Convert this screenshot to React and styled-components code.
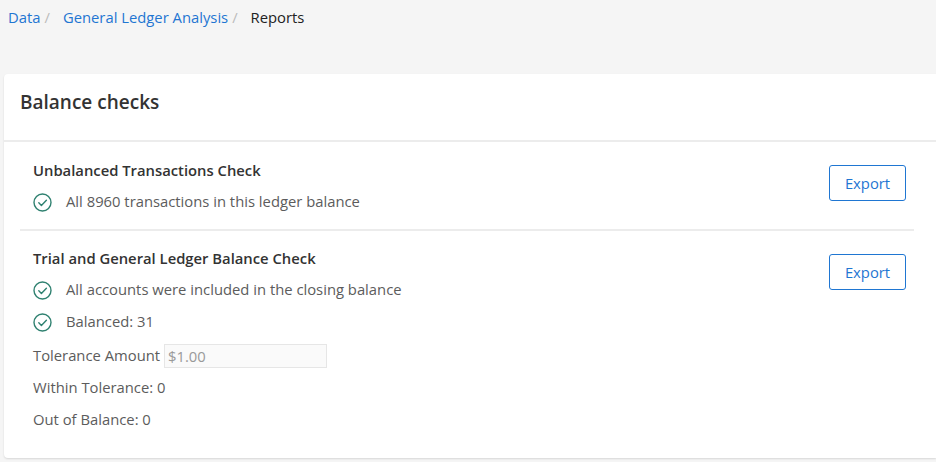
import React from "react";
import styled, { createGlobalStyle } from "styled-components";

const Global = createGlobalStyle`
  html, body {
    margin: 0;
    padding: 0;
    background: #f5f5f5;
    font-family: "Open Sans", "Liberation Sans", sans-serif;
  }
`;

const Page = styled.div`
  width: 936px;
  height: 462px;
  overflow: hidden;
  padding-left: 4px;
  box-sizing: border-box;
`;

const Crumbs = styled.nav`
  display: flex;
  align-items: center;
  height: 34px;
  margin-left: 4px;
  margin-bottom: 40px;
  font-size: 14.8px;
`;

const Crumb = styled.a`
  color: ${(p) => (p.$current ? "#222" : "#1f76d2")};
`;

const Slash = styled.span`
  color: #bbb;
  margin: 0 13px 0 4px;
`;

const Card = styled.section`
  width: 932px;
  height: 384px;
  background: #fff;
  border-radius: 4px 0 0 4px;
  box-shadow: 0 1px 2px rgba(0, 0, 0, 0.12);
`;

const CardHeader = styled.header`
  height: 68px;
  display: flex;
  align-items: center;
  padding: 0 16px 10px;
  box-sizing: border-box;
  border-bottom: 2px solid #ececec;
`;

const CardTitle = styled.h2`
  margin: 0;
  font-size: 19px;
  font-weight: 600;
  color: #333;
`;

const ExportButton = styled.button`
  width: 77px;
  height: 36px;
  background: #fff;
  border: 1px solid #1f76d2;
  border-radius: 3px;
  color: #1f76d2;
  font: inherit;
  font-size: 14.8px;
  margin-top: ${(p) => p.$top}px;
`;

const Check = styled.div`
  display: flex;
  justify-content: space-between;
  align-items: flex-start;
  margin: 0 22px 0 16px;
  padding: 15px 8px 0 13px;
  height: ${(p) => p.$height}px;
  box-sizing: border-box;
  & + & {
    padding-top: 14px;
    border-top: 2px solid #ececec;
  }
`;

const Lines = styled.div`
  display: flex;
  flex-direction: column;
`;

const CheckTitle = styled.h3`
  margin: 0;
  height: 28px;
  line-height: 26px;
  font-size: 14.8px;
  font-weight: 600;
  color: #333;
`;

const Line = styled.div`
  display: flex;
  align-items: center;
  height: 32px;
  box-sizing: border-box;
  font-size: 14.8px;
  color: #5c5c5c;
`;

const ToleranceLine = styled(Line)`
  height: 34px;
  padding-top: 2px;
`;

const Tick = styled.svg`
  width: 19px;
  height: 19px;
  margin-right: 14px;
  margin-top: 2px;
  flex: none;
`;

const Amount = styled.input`
  width: 163px;
  height: 24px;
  box-sizing: border-box;
  margin: 1px 0 0 4px;
  padding: 0 3px;
  border: 1px solid #e6e6e6;
  background: #fafafa;
  font: inherit;
  color: #999;
  &::placeholder {
    color: #999;
    opacity: 1;
  }
`;

const TickIcon = () => (
  <Tick viewBox="0 0 19 19" fill="none" stroke="#2f8170" strokeWidth="1.4">
    <circle cx="9.5" cy="9.5" r="8.5" />
    <path d="M5.8 9.8l2.6 2.6 5-5.2" strokeLinecap="round" strokeLinejoin="round" />
  </Tick>
);

export default function App() {
  return (
    <>
      <Global />
      <Page>
        <Crumbs>
          <Crumb>Data</Crumb>
          <Slash>/</Slash>
          <Crumb>General Ledger Analysis</Crumb>
          <Slash>/</Slash>
          <Crumb $current>Reports</Crumb>
        </Crumbs>
        <Card>
          <CardHeader>
            <CardTitle>Balance checks</CardTitle>
          </CardHeader>
          <Check $height={87}>
            <Lines>
              <CheckTitle>Unbalanced Transactions Check</CheckTitle>
              <Line>
                <TickIcon />
                All 8960 transactions in this ledger balance
              </Line>
            </Lines>
            <ExportButton $top={8}>Export</ExportButton>
          </Check>
          <Check $height={220}>
            <Lines>
              <CheckTitle>Trial and General Ledger Balance Check</CheckTitle>
              <Line>
                <TickIcon />
                All accounts were included in the closing balance
              </Line>
              <Line>
                <TickIcon />
                Balanced: 31
              </Line>
              <ToleranceLine>
                Tolerance Amount
                <Amount placeholder="$1.00" disabled />
              </ToleranceLine>
              <Line>Within Tolerance: 0</Line>
              <Line>Out of Balance: 0</Line>
            </Lines>
            <ExportButton $top={9}>Export</ExportButton>
          </Check>
        </Card>
      </Page>
    </>
  );
}
